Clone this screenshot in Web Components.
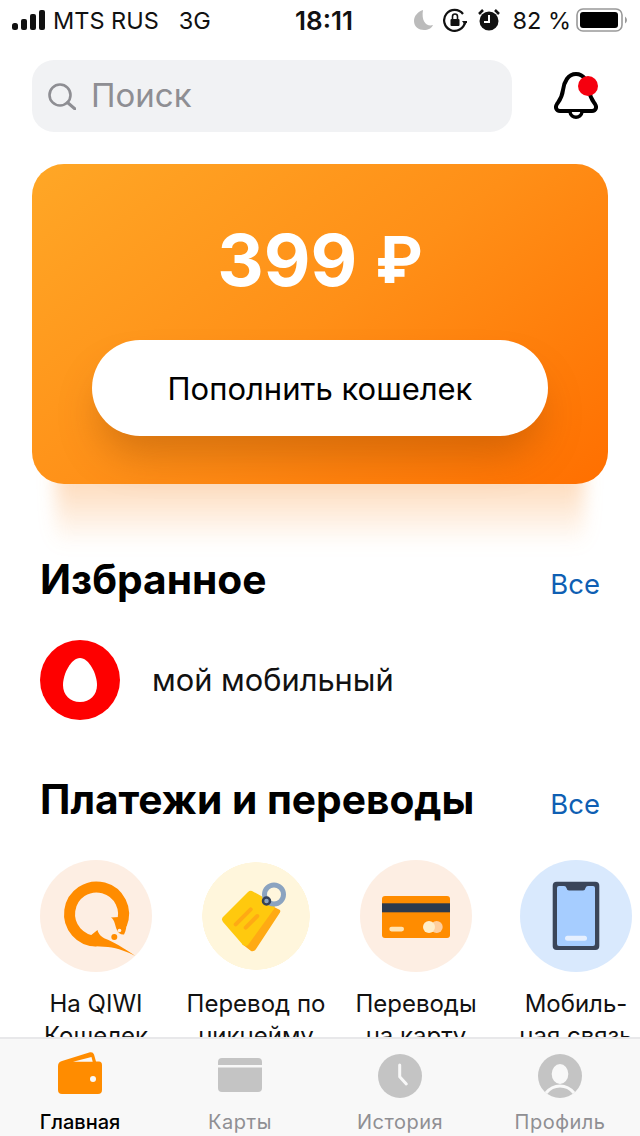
<!DOCTYPE html>
<html lang="ru">
<head>
<meta charset="utf-8">
<title>QIWI</title>
<style>
  html { background: #fff; }
  body { margin: 0; width: 640px; height: 1136px; overflow: hidden; font-family: Inter, "Noto Sans", sans-serif; color: #000; }
  svg { display: block; }
</style>
</head>
<body>
<app-shell>
  <status-bar></status-bar>
  <search-row></search-row>
  <balance-card amount="399" currency="₽" action="Пополнить кошелек"></balance-card>
  <section-head title-text="Избранное" style="margin-top:66px"></section-head>
  <favorite-row label="мой мобильный"></favorite-row>
  <section-head title-text="Платежи и переводы" style="margin-top:50px"></section-head>
  <pay-list>
    <pay-tile color="#fdeee3">
      <svg slot="icon" width="112" height="112" viewBox="0 0 112 112">
        <path d="M81.500 64.300A27 27 0 1 0 56.500 81" fill="none" stroke="#ff8c00" stroke-width="11"/>
        <path d="M71 57.500C75 60 75 66 77 70C78 73 81 75 84 74.500C86 71 87 66 86 60L79 57Z" fill="#ff8c00"/>
        <path d="M57.500 70C58.500 74 61 77 66 79C72 81 84 88 95.300 96C88 92 78 88 68 87C62 86.500 58 86.500 52 86L50 76Z" fill="#ff8c00"/>
        <circle cx="74.300" cy="77" r="3" fill="#ff8c00"/>
        <circle cx="79.500" cy="70.500" r="1.800" fill="#fdeee3"/>
      </svg>
      На QIWI<br>Кошелек
    </pay-tile>
    <pay-tile color="#fff6dc" size="108">
      <svg slot="icon" width="112" height="112" viewBox="0 0 112 112">
        <path d="M70 45L80 50Q81 52 79 54L56 89Q54 92 51 91L42 84Z" fill="#ffaa14"/>
        <path d="M52 31L72 42Q76 45 74 49L48 85Q46 87 43 85L23 62Q21 59 23 57L48 32Q50 30 52 31Z" fill="#ffc90e"/>
        <path d="M50.700 49.300L35.700 64.300M57.300 56L45.700 67.700" stroke="#ffaa14" stroke-width="4" stroke-linecap="round"/>
        <circle cx="74" cy="34.500" r="9.500" fill="none" stroke="#8ba3c0" stroke-width="5"/>
        <circle cx="66.500" cy="41" r="3.500" fill="none" stroke="#33415a" stroke-width="2.500"/>
      </svg>
      Перевод по<br>никнейму
    </pay-tile>
    <pay-tile color="#fdeee3">
      <svg slot="icon" width="112" height="112" viewBox="0 0 112 112">
        <rect x="22" y="36" width="68" height="42" rx="3" fill="#ff8c00"/>
        <rect x="22" y="43.300" width="68" height="9" fill="#2d3a4d"/>
        <rect x="29.300" y="66.700" width="14.700" height="4.700" rx="2.300" fill="#ffe3b3"/>
        <circle cx="76.700" cy="67" r="6" fill="#ffcf9e"/>
        <circle cx="69" cy="67" r="6" fill="#ffeec9"/>
      </svg>
      Переводы<br>на карту
    </pay-tile>
    <pay-tile color="#d9e9fd">
      <svg slot="icon" width="112" height="112" viewBox="0 0 112 112">
        <rect x="32.700" y="21.700" width="46.600" height="68.300" rx="4" fill="#3a4559"/>
        <path d="M37 28Q37 26 39 26H44Q46 26 46.500 28Q47 30.500 49 30.500H63Q65 30.500 65.500 28Q66 26 68 26H73Q75 26 75 28V84Q75 86 73 86H39Q37 86 37 84Z" fill="#a6cdff"/>
        <rect x="45" y="75.700" width="22" height="5" rx="2.500" fill="#e6f0ff"/>
      </svg>
      Мобиль-<br>ная связь
    </pay-tile>
  </pay-list>
</app-shell>
<tab-bar>
  <tab-item label="Главная" active>
    <svg width="44" height="46" viewBox="0 0 44 46">
      <path d="M0 14Q0 10 4 9L32 .3Q35 -.3 36 2.500L38 9.500H41Q44 9.500 44 13V38Q44 42 40 42H4Q0 42 0 38Z" fill="#ff8c00"/>
      <path d="M15 9.700L33.500 5L34.700 9.700Z" fill="#f8f8f8"/>
      <circle cx="35" cy="27" r="3" fill="#f8f8f8"/>
    </svg>
  </tab-item>
  <tab-item label="Карты">
    <svg width="44" height="46" viewBox="0 0 44 46">
      <path d="M0 10Q0 6 4 6H40Q44 6 44 10V13H0Z" fill="#c4c4c4"/>
      <path d="M0 15.500H44V36Q44 40 40 40H4Q0 40 0 36Z" fill="#c4c4c4"/>
    </svg>
  </tab-item>
  <tab-item label="История">
    <svg width="44" height="46" viewBox="0 0 44 46">
      <circle cx="22" cy="24" r="22" fill="#c4c4c4"/>
      <path d="M21.700 13V24.700L28.300 32" fill="none" stroke="#f8f8f8" stroke-width="3" stroke-linecap="round" stroke-linejoin="round"/>
    </svg>
  </tab-item>
  <tab-item label="Профиль">
    <svg width="44" height="46" viewBox="0 0 44 46">
      <circle cx="22" cy="24" r="22" fill="#c4c4c4"/>
      <ellipse cx="22" cy="22" rx="8.300" ry="10" fill="#f8f8f8"/>
      <path d="M8 41C12 36 17 34 22 34S32 36 36 41" fill="none" stroke="#f8f8f8" stroke-width="3"/>
    </svg>
  </tab-item>
</tab-bar>

<script>
  const attach = (host, html) => {
    host.attachShadow({ mode: 'open' }).innerHTML = html
  }

  customElements.define('app-shell', class extends HTMLElement {
    constructor () {
      super()
      attach(this, `
        <style>
          :host { display: block; height: 1037px; overflow: hidden; }
        </style>
        <slot></slot>`)
    }
  })

  customElements.define('status-bar', class extends HTMLElement {
    constructor () {
      super()
      attach(this, `
        <style>
          :host { display: flex; align-items: center; height: 40px; padding: 0 12px; font-size: 23.5px; color: #111; box-sizing: border-box; }
          .left, .right { display: flex; align-items: center; flex: 1; }
          .right { justify-content: flex-end; }
          .bars { margin-right: 8px; }
          .net { margin-left: 20px; }
          .time { font-weight: 600; font-size: 26px; margin-left: 8px; }
          .batt { margin-left: 5px; }
          .moon { margin-right: 9px; }
          .lock { margin-right: 11px; }
          .alarm { margin-right: 12px; }
          span { white-space: nowrap; }
        </style>
        <div class="left">
          <svg class="bars" width="33" height="20" viewBox="0 0 33 20">
            <rect x="0" y="13" width="6" height="7" rx="2.500" fill="#111"/>
            <rect x="9" y="9" width="6" height="11" rx="2" fill="#111"/>
            <rect x="18" y="4" width="6" height="16" rx="2" fill="#111"/>
            <rect x="27" y="0" width="6" height="20" rx="2" fill="#111"/>
          </svg>
          <span>MTS RUS</span><span class="net">3G</span>
        </div>
        <span class="time">18:11</span>
        <div class="right">
          <svg class="moon" width="20" height="22" viewBox="0 0 20 22">
            <path d="M9 1C3.500 3 0 7 0 12C0 18 5 21 10 21C14 21 18 19 19 16C13 18 7 13 9 1Z" fill="#bbb"/>
          </svg>
          <svg class="lock" width="24" height="24" viewBox="0 0 24 24">
            <path d="M20 6A10.500 10.500 0 1 0 22 14" fill="none" stroke="#111" stroke-width="2.200"/>
            <path d="M19 13H25L22 17Z" fill="#111"/>
            <rect x="7.500" y="11" width="9" height="7" rx="1" fill="#111"/>
            <path d="M9.500 11V8.500A2.500 2.500 0 0 1 14.500 8.500V11" fill="none" stroke="#111" stroke-width="1.600"/>
          </svg>
          <svg class="alarm" width="22" height="24" viewBox="0 0 22 24">
            <circle cx="11" cy="13" r="9.500" fill="#111"/>
            <path d="M1 6L5 2M21 6L17 2" stroke="#111" stroke-width="2.500"/>
            <path d="M11 7V14H6" fill="none" stroke="#fff" stroke-width="2"/>
          </svg>
          <span>82 %</span>
          <svg class="batt" width="52" height="24" viewBox="0 0 52 24">
            <rect x="1" y="1" width="45" height="22" rx="6" fill="none" stroke="#999" stroke-width="1.600"/>
            <rect x="4" y="4" width="38" height="16" rx="3" fill="#000"/>
            <path d="M49 8.500Q51 10 51 12T49 15.500Z" fill="#999"/>
          </svg>
        </div>`)
    }
  })

  customElements.define('search-row', class extends HTMLElement {
    constructor () {
      super()
      attach(this, `
        <style>
          :host { display: flex; align-items: center; margin-top: 20px; padding-left: 32px; }
          .box { display: flex; align-items: center; width: 480px; height: 72px; border-radius: 22px; background: #f1f2f4; padding-left: 16px; gap: 15px; box-sizing: border-box; color: #8e8e93; font-size: 33px; }
          .box span { margin-top: -3px; }
          .bell { margin-left: 42px; }
        </style>
        <div class="box">
          <svg width="28" height="27" viewBox="0 0 28 27">
            <circle cx="12" cy="12" r="10.500" fill="none" stroke="#8e8e93" stroke-width="2.600"/>
            <path d="M19.500 19.500L27 26" stroke="#8e8e93" stroke-width="3" stroke-linecap="round"/>
          </svg>
          <span>Поиск</span>
        </div>
        <svg class="bell" width="44" height="48" viewBox="0 0 44 48">
          <path d="M22 2C14 2 10 10 9 18C8 26 5 29 3 32C1 35 2 39 6 39H38C42 39 43 35 41 32C39 29 36 26 35 18C34 10 30 2 22 2Z" fill="#fff" stroke="#000" stroke-width="4" stroke-linejoin="round"/>
          <path d="M16 40C17 47 27 47 28 40" fill="#fff" stroke="#000" stroke-width="3.500"/>
          <circle cx="34" cy="14" r="10" fill="#f5000f"/>
        </svg>`)
    }
  })

  customElements.define('balance-card', class extends HTMLElement {
    constructor () {
      super()
      attach(this, `
        <style>
          :host { position: relative; display: flex; flex-direction: column; align-items: center; box-sizing: border-box; width: 576px; height: 320px; margin: 32px 0 0 32px; padding-top: 52px; border-radius: 32px; background: linear-gradient(142deg, #ffa726 0%, #ff8f17 50%, #ff6f00 100%); }
          /* the soft glow under the card */
          :host::after { content: ''; position: absolute; z-index: -1; left: 24px; right: 24px; top: calc(100% - 20px); height: 82px; background: linear-gradient(rgba(250, 140, 40, .3) 24%, rgba(250, 140, 40, 0) 100%); filter: blur(9px); }
          .amount { display: flex; gap: 18px; font-size: 72px; line-height: 88px; font-weight: 700; color: #fff; }
          .currency { font-size: 64px; }
          button { width: 456px; height: 96px; margin-top: 36px; border: 0; border-radius: 48px; background: #fff; font: 400 31px Inter, sans-serif; color: #000; box-shadow: 0 26px 40px -8px rgba(130, 60, 0, .34); }
        </style>
        <div class="amount"><span class="sum"></span><span class="currency"></span></div>
        <button></button>`)
      this.shadowRoot.querySelector('.sum').textContent = this.getAttribute('amount')
      this.shadowRoot.querySelector('.currency').textContent = this.getAttribute('currency')
      this.shadowRoot.querySelector('button').textContent = this.getAttribute('action')
    }
  })

  customElements.define('section-head', class extends HTMLElement {
    constructor () {
      super()
      attach(this, `
        <style>
          :host { display: flex; align-items: center; justify-content: space-between; height: 60px; padding: 0 40px; }
          h2 { margin: 0 0 1px; font-size: 40.7px; font-weight: 700; }
          a { font-size: 27.5px; color: #0f5fb3; margin-top: 8px; }
        </style>
        <h2></h2>
        <a>Все</a>`)
      this.shadowRoot.querySelector('h2').textContent = this.getAttribute('title-text')
    }
  })

  customElements.define('favorite-row', class extends HTMLElement {
    constructor () {
      super()
      attach(this, `
        <style>
          :host { display: flex; align-items: center; gap: 32px; margin-top: 30px; padding-left: 40px; font-size: 30.8px; color: #111; }
          span { margin-top: -2px; }
        </style>
        <svg width="80" height="80" viewBox="0 0 80 80">
          <circle cx="40" cy="40" r="40" fill="#fe0000"/>
          <path d="M40 18C49 18 57 34 57 45C57 55 50 62 40 62C30 62 23 55 23 45C23 34 31 18 40 18Z" fill="#fff"/>
        </svg>
        <span></span>`)
      this.shadowRoot.querySelector('span').textContent = this.getAttribute('label')
    }
  })

  customElements.define('pay-list', class extends HTMLElement {
    constructor () {
      super()
      attach(this, `
        <style>
          :host { display: flex; margin-top: 30px; padding-left: 16px; }
        </style>
        <slot></slot>`)
    }
  })

  customElements.define('pay-tile', class extends HTMLElement {
    constructor () {
      super()
      attach(this, `
        <style>
          :host { display: flex; flex-direction: column; align-items: center; flex: none; width: 160px; font-size: 24px; line-height: 32px; text-align: center; color: #111; }
          .circle { display: flex; align-items: center; justify-content: center; width: 112px; height: 112px; border-radius: 50%; }
          .text { margin-top: 16px; white-space: nowrap; }
        </style>
        <div class="circle"><slot name="icon"></slot></div>
        <div class="text"><slot></slot></div>`)
      const circle = this.shadowRoot.querySelector('.circle')
      circle.style.background = this.getAttribute('color')
      if (this.hasAttribute('size')) {
        // the tag circle is a little smaller than the others
        const r = this.getAttribute('size') / 2
        circle.style.background = `radial-gradient(circle closest-side, ${this.getAttribute('color')} ${r - 0.5}px, transparent ${r}px)`
      }
    }
  })

  customElements.define('tab-bar', class extends HTMLElement {
    constructor () {
      super()
      attach(this, `
        <style>
          :host { display: flex; box-sizing: border-box; height: 99px; background: #f8f8f8; border-top: 2px solid #e8e8ea; }
        </style>
        <slot></slot>`)
    }
  })

  customElements.define('tab-item', class extends HTMLElement {
    constructor () {
      super()
      attach(this, `
        <style>
          :host { display: flex; flex-direction: column; align-items: center; flex: 1; padding-top: 13px; font-size: 20px; letter-spacing: .5px; color: #8f8f93; }
          :host([active]) { color: #000; font-weight: 500; letter-spacing: 0; }
          .label { margin-top: 12px; line-height: 24px; }
        </style>
        <slot></slot>
        <div class="label"></div>`)
      this.shadowRoot.querySelector('.label').textContent = this.getAttribute('label')
    }
  })
</script>
</body>
</html>
